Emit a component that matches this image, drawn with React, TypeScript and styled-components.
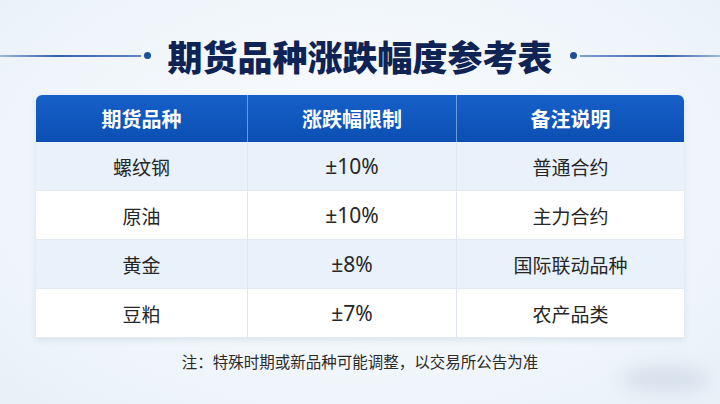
import React from "react";
import styled, { createGlobalStyle } from "styled-components";

const Global = createGlobalStyle`
  html, body { margin: 0; padding: 0; }
  body {
    width: 720px;
    height: 404px;
    overflow: hidden;
    font-family: "Noto Sans CJK SC", "Noto Sans", sans-serif;
  }
`;

const Page = styled.div`
  width: 720px;
  height: 404px;
  box-sizing: border-box;
  background: radial-gradient(ellipse at 50% 45%, #fbfdff 0%, #f1f6fb 60%, #e8f0f8 100%);
  display: flex;
  flex-direction: column;
  align-items: center;
  position: relative;
  overflow: hidden;
`;

const TitleRow = styled.div`
  width: 100%;
  height: 95px;
  display: flex;
  align-items: center;
  padding-top: 16px;
  box-sizing: border-box;
`;

const Line = styled.div<{ $side: "left" | "right" }>`
  flex: 1;
  height: 2px;
  background: ${(p) =>
    p.$side === "left"
      ? "linear-gradient(90deg, #9db8dc 0%, #2f62ad 40%, #5c86c3 100%)"
      : "linear-gradient(90deg, #7ea0d0 0%, #2f62ad 60%, #9db8dc 100%)"};
`;

const Dot = styled.span`
  width: 7px;
  height: 7px;
  border-radius: 50%;
  background: #1b4f9c;
  margin: 0 3px;
  flex: none;
`;

const Title = styled.h1`
  margin: 0 14px;
  font-size: 35px;
  font-weight: 900;
  color: #0f2454;
  letter-spacing: 0;
  line-height: 1;
  white-space: nowrap;
`;

const Table = styled.div`
  width: 648px;
  display: grid;
  grid-template-columns: 212px 209px 227px;
  border-radius: 6px 6px 0 0;
  overflow: hidden;
  box-shadow: 0 2px 6px rgba(40, 80, 140, 0.12);
  background: #ffffff;
`;

const HeadCell = styled.div<{ $last?: boolean }>`
  height: 47px;
  display: flex;
  align-items: center;
  justify-content: center;
  background: linear-gradient(180deg, #1660c8 0%, #0b4fb3 100%);
  color: #ffffff;
  font-size: 20px;
  font-weight: 700;
  border-right: ${(p) => (p.$last ? "none" : "1px solid #6f9ad8")};
`;

const Cell = styled.div<{ $alt: boolean; $last?: boolean }>`
  height: 49px;
  display: flex;
  align-items: center;
  justify-content: center;
  background: ${(p) => (p.$alt ? "#e9f1fa" : "#ffffff")};
  color: #262626;
  font-size: 19px;
  font-weight: 400;
  border-right: ${(p) => (p.$last ? "none" : "1px solid #dfe6ef")};
  border-bottom: 1px solid #e3e9f1;
  box-sizing: border-box;
`;

const Num = styled.span`
  font-family: "Noto Sans", "Noto Sans CJK SC", sans-serif;
  font-size: 21px;
`;

const Note = styled.p`
  margin: 12px 0 0;
  font-size: 15.5px;
  color: #2a2a2a;
  letter-spacing: 0;
`;

const Blur = styled.div`
  position: absolute;
  right: 10px;
  bottom: 12px;
  width: 90px;
  height: 26px;
  border-radius: 50%;
  background: rgba(190, 205, 222, 0.45);
  filter: blur(8px);
`;

const headers = ["期货品种", "涨跌幅限制", "备注说明"];
const rows = [
  ["螺纹钢", "±10%", "普通合约"],
  ["原油", "±10%", "主力合约"],
  ["黄金", "±8%", "国际联动品种"],
  ["豆粕", "±7%", "农产品类"],
];

export default function App() {
  return (
    <Page>
      <Global />
      <TitleRow>
        <Line $side="left" />
        <Dot />
        <Title>期货品种涨跌幅度参考表</Title>
        <Dot />
        <Line $side="right" />
      </TitleRow>
      <Table>
        {headers.map((h, i) => (
          <HeadCell key={h} $last={i === 2}>
            {h}
          </HeadCell>
        ))}
        {rows.map((r, ri) =>
          r.map((c, ci) => (
            <Cell key={`${ri}-${ci}`} $alt={ri % 2 === 0} $last={ci === 2}>
              {ci === 1 ? <Num>{c}</Num> : c}
            </Cell>
          ))
        )}
      </Table>
      <Note>注：特殊时期或新品种可能调整，以交易所公告为准</Note>
      <Blur />
    </Page>
  );
}
